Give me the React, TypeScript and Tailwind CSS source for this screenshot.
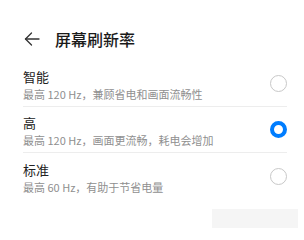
import React from "react";

const items = [
  { title: "智能", sub: "最高 120 Hz，兼顾省电和画面流畅性", selected: false },
  { title: "高", sub: "最高 120 Hz，画面更流畅，耗电会增加", selected: true },
  { title: "标准", sub: "最高 60 Hz，有助于节省电量", selected: false },
];

export default function App() {
  return (
    <div
      className="relative w-[304px] h-[240px] bg-white overflow-hidden"
      style={{ fontFamily: '"Noto Sans CJK SC", "Noto Sans", sans-serif' }}
    >
      <div className="flex items-center h-[61px] pt-[17px] pl-[24px]">
        <svg width="16" height="14" viewBox="0 0 16 14" fill="none" stroke="#333" strokeWidth="1.3" strokeLinecap="round" strokeLinejoin="round">
          <path d="M15 7H1.5" />
          <path d="M7.5 1L1.5 7L7.5 13" />
        </svg>
        <div className="ml-[15px] text-[16px] leading-[20px] font-medium text-[#1a1a1a]">屏幕刷新率</div>
      </div>
      <div className="pl-[23px] pr-[17px]">
        {items.map((it, i) => (
          <div
            key={i}
            className={`flex items-center justify-between h-[46px] ${i < 2 ? "border-b border-[#ededed]" : ""}`}
          >
            <div className="flex flex-col pt-[3px]">
              <div className="text-[13px] leading-[16px] text-[#222]">{it.title}</div>
              <div className="mt-[2px] text-[11px] leading-[14px] text-[#8f8f8f]">{it.sub}</div>
            </div>
            {it.selected ? (
              <div className="w-[17px] h-[17px] rounded-full border-[4px] border-[#007dff] bg-white" />
            ) : (
              <div className="w-[17px] h-[17px] rounded-full border-[1.5px] border-[#c8c8c8] bg-white" />
            )}
          </div>
        ))}
      </div>
      <div className="absolute left-[212px] top-[209px] w-[86px] h-[19px] bg-[#f5f5f5]" />
    </div>
  );
}
